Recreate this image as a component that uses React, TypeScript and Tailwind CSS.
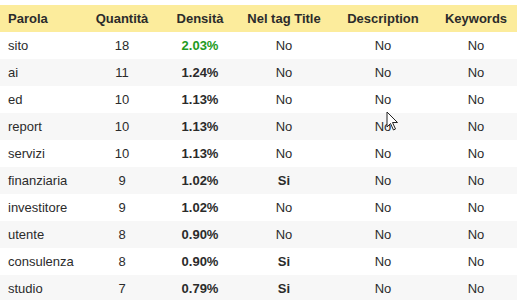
const rows: [string, number, string, string][] = [
  ["sito", 18, "2.03%", "No"],
  ["ai", 11, "1.24%", "No"],
  ["ed", 10, "1.13%", "No"],
  ["report", 10, "1.13%", "No"],
  ["servizi", 10, "1.13%", "No"],
  ["finanziaria", 9, "1.02%", "Si"],
  ["investitore", 9, "1.02%", "No"],
  ["utente", 8, "0.90%", "No"],
  ["consulenza", 8, "0.90%", "Si"],
  ["studio", 7, "0.79%", "Si"],
];

function Cursor() {
  return (
    <svg
      className="absolute left-[386px] top-[111px]"
      width="14"
      height="21"
      viewBox="0 0 14 21"
    >
      <path
        d="M1 1 L1 16 L4.5 12.5 L7.5 19 L9.5 18 L6.5 11.5 L11.5 11.5 Z"
        fill="white"
        stroke="#222"
        strokeWidth="1"
        strokeLinejoin="round"
      />
    </svg>
  );
}

export default function App() {
  return (
    <div className="relative min-h-[300px] bg-white pt-[5px] text-[13px] text-[#2b2b2b] [font-family:'Liberation_Sans',Arial,sans-serif]">
      <table className="w-[517px] table-fixed border-collapse">
        <colgroup>
          <col className="w-[81px]" />
          <col className="w-[82px]" />
          <col className="w-[74px]" />
          <col className="w-[94px]" />
          <col className="w-[104px]" />
          <col className="w-[82px]" />
        </colgroup>
        <thead>
          <tr className="h-[27px] bg-[#fcec9c] font-bold">
            <th className="pl-2 text-left">Parola</th>
            <th className="text-center">Quantità</th>
            <th className="text-center">Densità</th>
            <th className="text-center">Nel tag Title</th>
            <th className="text-center">Description</th>
            <th className="text-center">Keywords</th>
          </tr>
        </thead>
        <tbody>
          {rows.map(([word, qty, dens, title], i) => (
            <tr
              key={word}
              className={i % 2 === 1 ? "h-[27px] bg-[#f7f7f7]" : "h-[27px] bg-white"}
            >
              <td className="pl-2 text-left">{word}</td>
              <td className="text-center">{qty}</td>
              <td
                className={
                  i === 0
                    ? "text-center font-bold text-[#229a22]"
                    : "text-center font-bold"
                }
              >
                {dens}
              </td>
              <td className={title === "Si" ? "text-center font-bold" : "text-center"}>
                {title}
              </td>
              <td className="text-center">No</td>
              <td className="text-center">No</td>
            </tr>
          ))}
        </tbody>
      </table>
      <Cursor />
    </div>
  );
}
